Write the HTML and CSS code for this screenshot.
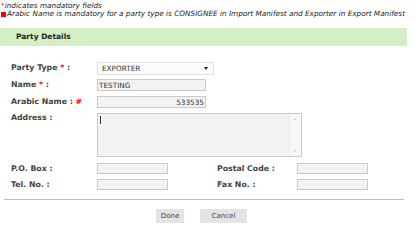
FILE: index.html
```html
<!DOCTYPE html>
<html>
<head>
	<meta charset="UTF-8">
	<title>Party Details</title>
	<link rel="stylesheet" href="styles.css">
</head>
<body>
	<div class="notes">
		<p><span class="req">*</span>indicates mandatory fields</p>
		<p><span class="sq"></span>Arabic Name is mandatory for a party type is CONSIGNEE in Import Manifest and Exporter in Export Manifest</p>
	</div>
	<div class="bar">Party Details</div>
	<div class="form">
		<div class="row r-sel">
			<label>Party Type <span class="req">*</span> :</label>
			<span class="sel">
				<select>
					<option>EXPORTER</option>
				</select>
			</span>
		</div>
		<div class="row r-inp">
			<label>Name <span class="req">*</span> :</label>
			<input type="text" class="wide" value="TESTING">
		</div>
		<div class="row r-inp">
			<label>Arabic Name : <span class="req">#</span></label>
			<input type="text" class="wide right" value="533535">
		</div>
		<div class="row r-area">
			<label>Address :</label>
			<div class="area">
				<span class="caret"></span>
				<div class="scroll">
					<span class="up"></span>
					<span class="down"></span>
				</div>
			</div>
		</div>
		<div class="row r-small">
			<label>P.O. Box :</label>
			<input type="text" class="short">
			<label class="second">Postal Code :</label>
			<input type="text" class="short">
		</div>
		<div class="row r-small">
			<label>Tel. No. :</label>
			<input type="text" class="short">
			<label class="second">Fax No. :</label>
			<input type="text" class="short">
		</div>
	</div>
	<div class="line"></div>
	<div class="buttons">
		<button class="btn done">Done</button>
		<button class="btn cancel">Cancel</button>
	</div>
</body>
</html>
```

FILE: styles.css
```css
*{margin: 0;padding: 0;box-sizing: border-box;}
body{width: 419px;height: 248px;background: #fff;font-family: "DejaVu Sans", Verdana, sans-serif;color: #333;overflow: hidden;}
.notes{padding: 2px 0 0 1px;font-style: italic;font-size: 7.3px;line-height: 8px;color: #222;}
.notes .req{color: #e00;font-style: normal;}
.sq{display: inline-block;width: 5px;height: 5px;background: #e00;margin-right: 1px;vertical-align: -1px;}
.req{color: #e00;}
.bar{margin-top: 10px;width: 407px;height: 18px;background: #d4efc6;padding-left: 16px;font-weight: bold;font-size: 7.5px;line-height: 18px;color: #222;}
.form{padding: 16px 0 0 11px;}
.row{display: flex;align-items: flex-start;}
.row label{width: 86px;flex: none;font-weight: bold;font-size: 7.8px;line-height: 9px;color: #444;white-space: nowrap;}
.row label.second{width: 80px;margin-left: 49px;}
.r-sel{height: 13px;margin-bottom: 4px;}
.r-inp{height: 12px;margin-bottom: 5px;}
.r-area{height: 44px;margin-bottom: 6px;}
.r-small{height: 12px;margin-bottom: 4px;}
.r-sel label{padding-top: 1px;}
.r-inp label,.r-small label{padding-top: 1px;}
.r-area label{padding-top: 0;}
.sel{position: relative;display: block;width: 117px;height: 13px;}
.sel select{display: block;appearance: none;-webkit-appearance: none;width: 117px;height: 13px;border: 1px solid #e2e2e2;border-radius: 0;background: #fcfcfc;font-family: inherit;font-size: 7.3px;color: #333;padding: 0 0 0 4px;outline: none;}
.sel::after{content: "";position: absolute;right: 6px;top: 5px;border-left: 2.5px solid transparent;border-right: 2.5px solid transparent;border-top: 3px solid #222;}
input{display: block;height: 12px;border: 1px solid #c9c9c9;background: #f3f3f3;font-family: inherit;font-size: 7.3px;color: #333;padding: 0 1px;outline: none;}
.wide{width: 109px;}
.right{text-align: right;}
.short{width: 71px;height: 11px;flex: none;}
.area{position: relative;width: 205px;height: 44px;border: 1px solid #c9c9c9;background: #f3f3f3;}
.caret{position: absolute;left: 2px;top: 2px;width: 1px;height: 8px;background: #333;}
.scroll{position: absolute;right: 0;top: 0;width: 12px;height: 42px;background: #f7f7f7;border-left: 1px solid #ececec;}
.up,.down{position: absolute;left: 4px;border-left: 1.5px solid transparent;border-right: 1.5px solid transparent;}
.up{top: 4px;border-bottom: 2px solid #bbb;}
.down{bottom: 4px;border-top: 2px solid #bbb;}
.line{margin: 8px 0 0 4px;width: 400px;height: 1px;background: #bdbdbd;}
.buttons{display: flex;justify-content: flex-start;gap: 16px;padding: 9px 0 0 156px;}
.btn{height: 14px;border: none;background: #e4e4e4;font-family: inherit;font-size: 7px;color: #444;}
.done{width: 28px;}
.cancel{width: 47px;}
```
